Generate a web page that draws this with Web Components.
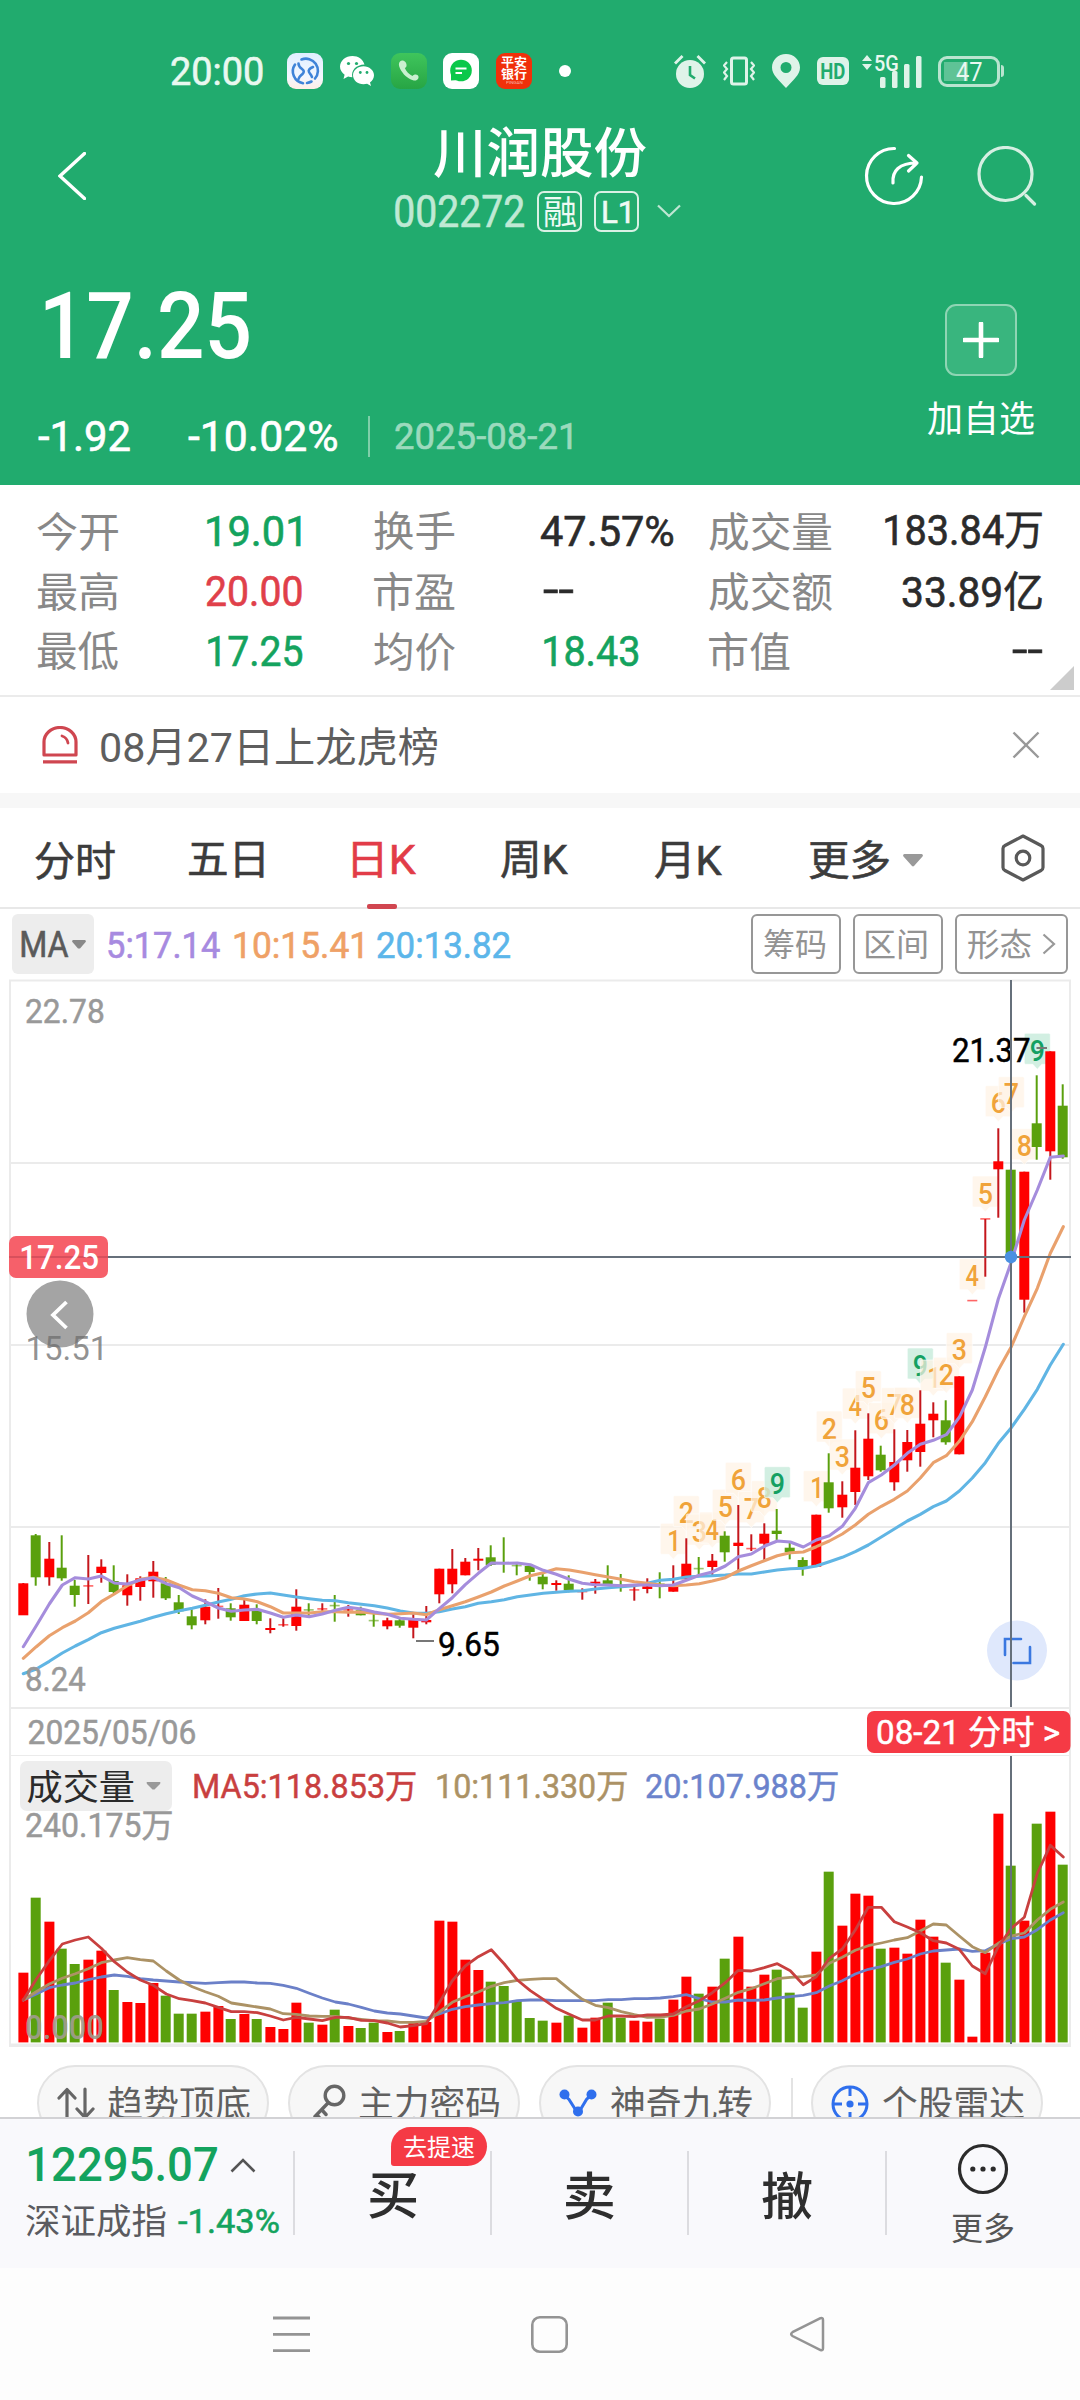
<!DOCTYPE html>
<html lang="zh-CN">
<head>
<meta charset="utf-8">
<title>川润股份 002272</title>
<style>
html,body{margin:0;padding:0;background:#fff}
body{width:1080px;height:2400px;overflow:hidden;font-family:Roboto,"Noto Sans CJK SC",sans-serif}
</style>
</head>
<body>
<stock-page></stock-page>
<script>
const FONT='Roboto,"Noto Sans CJK SC",sans-serif';
const ctx=document.createElement('canvas').getContext('2d');

/* Ink box of a run of text: scale and shift that fit it to a given width, centred on a given line. */
function fit(text,size,weight,width){
  ctx.font=`${weight} ${size}px ${FONT}`;
  const m=ctx.measureText(text);
  const ink=m.actualBoundingBoxLeft+m.actualBoundingBoxRight;
  const k=width?width/ink:1;
  return {k,width:width||ink,dx:m.actualBoundingBoxLeft*k,
    mid:(m.actualBoundingBoxAscent-m.actualBoundingBoxDescent)/2,
    base:(m.fontBoundingBoxAscent-m.fontBoundingBoxDescent)/2};
}

function define(name,html,setup){
  const tpl=document.createElement('template');
  tpl.innerHTML=html;
  customElements.define(name,class extends HTMLElement{
    connectedCallback(){
      if(this.shadowRoot)return;
      const root=this.attachShadow({mode:'open'});
      root.append(tpl.content.cloneNode(true));
      if(setup)setup(this,root);
    }
  });
}

/* <fit-text s w wt>: one line of text, s = font size, w = ink width, wt = weight.
   450 is a half step between regular and medium: regular with a hairline outline. */
define('fit-text',`<style>:host{display:block;flex:none}span{display:block;white-space:nowrap;width:max-content;transform-origin:0 0}</style><span><slot></slot></span>`,(el,root)=>{
  const s=+el.getAttribute('s'),w=+el.getAttribute('w');
  let wt=el.getAttribute('wt')||400;
  const half=wt==450;if(half)wt=400;
  const f=fit(el.textContent.trim(),s,wt,w),sp=root.querySelector('span');
  el.style.width=f.width+'px';el.style.height=s+'px';
  sp.style.cssText=`font:${wt} ${s}px/${s}px ${FONT};transform:translate(${f.dx}px,${f.mid-f.base}px) scaleX(${f.k})`+(half?';-webkit-text-stroke:.6px currentColor':'');
});

const ICONS={
 app:[36,36,`<defs><linearGradient id="a" x2="0" y2="1"><stop offset="0" stop-color="#dfeeff"/><stop offset=".65" stop-color="#f2f7ff"/><stop offset="1" stop-color="#ffeee6"/></linearGradient></defs><rect width="36" height="36" rx="9" fill="url(#a)"/><g fill="none" stroke="#3f83d8" stroke-width="2.600" stroke-linecap="round"><path d="M14.500 6.500A12 12 0 0 1 28 25.500M24.500 28.500A12 12 0 0 1 20 30M16 30.200A12 12 0 0 1 8 11.500"/><path d="M11.500 10.500c0 3 1.500 4 3.500 5.500s2.500 3 .5 5c-1.500 1.500-3.500 2.500-4 5M26 14c-3.500 1.500-5 3-4 5 .7 1.500 2 2.500 3 5"/></g>`],
 wechat:[34,30,`<path fill="#fff" d="M12.500 0C5.500 0 0 4.700 0 10.600c0 3.300 1.800 6.200 4.600 8.200L3.500 23l4.600-2.400c1.300.4 2.700.6 4.200.6C11 14 16 8.800 24.500 8.400 23 3.500 18.300 0 12.500 0z"/><path fill="#fff" d="M34 19.200c0-5-4.700-9-10.500-9s-10.500 4-10.500 9 4.700 9 10.500 9c1.300 0 2.500-.2 3.600-.5L31 30l-1-3.600c2.500-1.700 4-4.300 4-7.200z"/><g fill="#21ab6e"><circle cx="8.500" cy="7.500" r="1.600"/><circle cx="16.500" cy="7.500" r="1.600"/><circle cx="20.300" cy="16.500" r="1.400"/><circle cx="27" cy="16.500" r="1.400"/></g>`],
 phone:[36,36,`<defs><linearGradient id="p" x2="0" y2="1"><stop offset="0" stop-color="#3fc55c"/><stop offset="1" stop-color="#27a544"/></linearGradient></defs><rect width="36" height="36" rx="9" fill="url(#p)"/><path d="M9 8.500c-1.500 1.500-1.500 4 0 7 3 6 7.500 10 13 11.800 2.500.7 5-.3 5.500-2.600.3-1.700-.6-2.700-2-3-1.700-.3-3 .2-4 1.400-3.500-1.600-6.200-4.300-7.700-8 1.400-.8 2-2 1.700-3.700C15 9 13.500 7.800 12 7.500c-1.200-.2-2.200.2-3 1z" fill="#c9f0d0"/>`],
 chat:[36,36,`<rect width="36" height="36" rx="9" fill="#fff"/><circle cx="18" cy="17.500" r="10.800" fill="#0bc84a"/><path d="M8 18l0 9.500 8-.5z" fill="#0bc84a"/><path d="M12.500 15.500h11M12.500 20h6.500" stroke="#fff" stroke-width="2"/>`],
 alarm:[32,33,`<g fill="#dff3e9"><circle cx="16" cy="19" r="14"/><path d="M0 7.500L7.500 0l2 2L2 9.500zM32 7.500L24.500 0l-2 2L30 9.500z"/></g><path d="M16 11v9l5 3.500" fill="none" stroke="#21ab6e" stroke-width="2.600"/>`],
 vibrate:[32,30,`<g fill="none" stroke="#dff3e9"><rect x="8.500" y="2" width="15" height="26" rx="2" stroke-width="3"/><path d="M4 6l-3 3.500 3 3.500-3 3.500 3 3.500-3 4M28 6l3 3.500-3 3.500 3 3.500-3 3.500 3 4" stroke-width="2.200"/></g>`],
 pin:[28,34,`<path fill="#dff3e9" fill-rule="evenodd" d="M14 0C6 0 0 6 0 13.500 0 21 7 26 14 34c7-8 14-13 14-20.500C28 6 22 0 14 0zm0 8a5.500 5.500 0 1 1 0 11 5.500 5.500 0 0 1 0-11z"/>`],
 net:[60,33,`<g fill="#dff3e9"><path d="M0 6l5-6 5 6zM0 9h10l-5 6z"/><rect x="18" y="22" width="5.500" height="11" rx="1.500"/><rect x="30" y="16" width="5.500" height="17" rx="1.500"/><rect x="42" y="9" width="5.500" height="24" rx="1.500"/><rect x="54" y="1" width="5.500" height="32" rx="1.500"/></g>`],
 back:[28,48,`<path d="M26.500 1.500L2 24l24.500 22.500" fill="none" stroke="#fff" stroke-width="3.400" stroke-linecap="round"/>`],
 down:[24,14,`<path d="M1 1.500l11 10.500L23 1.500" fill="none" stroke="#bfe6d3" stroke-width="2.200"/>`],
 share:[60,60,`<g fill="none" stroke="#fff" stroke-width="3.200" stroke-linecap="round" stroke-linejoin="round"><path d="M30.500 2.500A27.500 27.500 0 1 0 57.500 31"/><path d="M29 37c-1-12 6-20 24-20M44.500 9.500l8.500 7.500-8.500 8"/></g>`],
 search:[60,60,`<circle cx="28.500" cy="28" r="26.500" fill="none" stroke="#d6efe2" stroke-width="3.200"/><path d="M49 49.500l8.500 8.500" stroke="#d6efe2" stroke-width="3.200" stroke-linecap="round"/>`],
 plus:[36,36,`<path d="M18 1.500v33M1.500 18h33" stroke="#fff" stroke-width="4.600" stroke-linecap="round"/>`],
 siren:[36,38,`<g fill="none" stroke="#cf4650" stroke-width="3.200"><path d="M2 29V16a16 14.500 0 0 1 32 0v13z" stroke-linejoin="round"/><path d="M1 35.800h34"/><path d="M20 10q5 1.500 6 7" stroke-linecap="round" stroke-width="2.800"/></g>`],
 close:[28,28,`<path d="M1.500 1.500l25 25m0-25l-25 25" stroke="#999" stroke-width="2.400"/>`],
 hex:[44,48,`<g fill="none" stroke="#595959" stroke-width="3.200" stroke-linejoin="round"><path d="M22 2L40 11.500q2 1 2 3v19q0 2-2 3L22 46 4 36.500q-2-1-2-3v-19q0-2 2-3z"/><circle cx="22" cy="24" r="6.800"/></g>`],
 tri:[20,13,`<path d="M1.500 0h17a1.500 1.500 0 0 1 1 2.500L11 12a1.500 1.500 0 0 1-2 0L.5 2.500A1.500 1.500 0 0 1 1.500 0z" fill="#999"/>`],
 tri2:[14,9,`<path d="M1 0h12q1.300.8.600 2L8 8.500H6L.400 2Q-.3.800 1 0z" fill="#888"/>`],
 right:[14,22,`<path d="M1.500 1.500L12 11 1.500 20.500" fill="none" stroke="#999" stroke-width="2.200"/>`],
 updown:[38,34,`<g fill="none" stroke="#666" stroke-width="3.200" stroke-linecap="round" stroke-linejoin="round"><path d="M10 31V3M2 11l8-8.500L18 11M28 2v28M20 22l8 8.500 8-8.500"/></g>`],
 key:[34,36,`<g fill="none" stroke="#666" stroke-width="3.400" stroke-linecap="round"><circle cx="22.500" cy="11.500" r="9.300"/><path d="M16 19L3 32.500M10 26l4 4.500M5 31l4 4.500"/></g>`],
 vee:[38,28,`<path d="M5 6l5 4.500 8 12.500h2l7.500-12.500L33 5" fill="none" stroke="#2f6fed" stroke-width="3"/><circle cx="5.500" cy="5.500" r="5" fill="#2f6fed"/><circle cx="32.500" cy="5.500" r="5" fill="#2f6fed"/><circle cx="19" cy="22.500" r="5" fill="#2f6fed"/>`],
 radar:[38,38,`<g fill="none" stroke="#2f6fed" stroke-width="3"><circle cx="19" cy="19" r="17"/><path d="M19 2v9M19 27v9M2 19h9M27 19h9"/></g><circle cx="19" cy="19" r="3.600" fill="#2f6fed"/>`],
 up:[26,15,`<path d="M1.500 13.500L13 2l11.500 11.500" fill="none" stroke="#555" stroke-width="2.600"/>`],
 more:[52,52,`<circle cx="26" cy="26" r="23.500" fill="none" stroke="#2b2b2b" stroke-width="3.200"/><g fill="#2b2b2b"><circle cx="15.800" cy="26" r="2.600"/><circle cx="26" cy="26" r="2.600"/><circle cx="36.200" cy="26" r="2.600"/></g>`],
 menu:[37,37,`<path d="M0 2h37M0 18.300h37M0 34.700h37" stroke="#949494" stroke-width="2.800"/>`],
 home:[37,37,`<rect x="1.300" y="1.300" width="34.400" height="34.400" rx="7.500" fill="none" stroke="#949494" stroke-width="2.600"/>`],
 prev:[36,37,`<path d="M31.500 2.200L3.500 16.200q-2.800 1.900 0 3.800l28 14q2.500.8 2.500-1.800V4q0-2.600-2.500-1.800z" fill="none" stroke="#949494" stroke-width="2.500"/>`]
};
define('ui-icon',`<style>:host{display:block;flex:none}svg{display:block}</style>`,(el,root)=>{
  const [w,h,body]=ICONS[el.getAttribute('name')];
  root.innerHTML+=`<svg width="${w}" height="${h}" viewBox="0 0 ${w} ${h}">${body}</svg>`;
});

define('status-bar',`<style>
:host{display:flex;height:142px;align-items:center;color:#e9f8f0;padding-left:171px}
ui-icon,.i{margin-left:var(--m,0)}
.i ui-icon{margin-left:0}
.i{box-sizing:border-box;flex:none}
.bank{width:36px;height:36px;border-radius:9px;background:#f0300a;color:#fff;display:flex;flex-direction:column;align-items:center;padding-top:3px}
.dot{width:12px;height:12px;border-radius:50%;background:#fff}
.hd{width:32px;height:28px;border-radius:6px;background:#dff3e9;color:#21ab6e;display:flex;align-items:center;justify-content:center}
.net{display:flex;position:relative}.net fit-text{position:absolute;left:13px;top:-3px}
.bat{width:62px;height:31px;border:3px solid #b9e4cf;border-radius:9px;display:flex;align-items:center;justify-content:center;background:linear-gradient(#5fc396,#5fc396) 3px 3px/24px 19px no-repeat}
.cap{width:3px;height:12px;border-radius:0 3px 3px 0;background:#b9e4cf;margin-left:1px}
</style>
<fit-text s="38" w="92" wt="450">20:00</fit-text>
<ui-icon name="app" style="--m:24px"></ui-icon>
<ui-icon name="wechat" style="--m:17px"></ui-icon>
<ui-icon name="phone" style="--m:17px"></ui-icon>
<ui-icon name="chat" style="--m:16px"></ui-icon>
<div class="i bank" style="--m:17px"><fit-text s="12" w="26" wt="700">平安</fit-text><fit-text s="12" w="26" wt="700">银行</fit-text><fit-text s="4" w="17" style="opacity:.6;margin-top:1px">PINGAN</fit-text></div>
<div class="i dot" style="--m:27px"></div>
<ui-icon name="alarm" style="--m:103px"></ui-icon>
<ui-icon name="vibrate" style="--m:17px"></ui-icon>
<ui-icon name="pin" style="--m:17px"></ui-icon>
<div class="i hd" style="--m:17px"><fit-text s="22" w="24" wt="700">HD</fit-text></div>
<div class="i net" style="--m:13px"><ui-icon name="net"></ui-icon><fit-text s="22" w="23" wt="500">5G</fit-text></div>
<div class="i bat" style="--m:16px"><fit-text s="26" w="26">47</fit-text></div><div class="cap"></div>`);

define('quote-header',`<style>
:host{display:block;height:485px;background:#21ab6e;color:#fff}
.nav{display:flex;height:100px;align-items:flex-start;padding-left:58px}
.t{width:290px;margin-left:309px;display:flex;flex-direction:column;align-items:center;margin-top:-17px}
.sub{display:flex;align-items:center;align-self:stretch;height:42px;color:#bfe9d4;margin-top:11px}
.tag{box-sizing:border-box;width:45px;height:41px;border:2.500px solid #d9f1e5;border-radius:7px;color:#effaf4;display:flex;align-items:center;justify-content:center;margin-left:12px}
.main{display:flex;padding:0 46px 0 38px}
.l{padding-top:37px}
.row{display:flex;align-items:center;height:42px;margin-top:44px}
.sep{width:2px;height:41px;background:#7fcfa9;margin:0 25px 0 31px}
.r{margin-left:auto;padding-top:62px;display:flex;flex-direction:column;align-items:center}
.add{box-sizing:border-box;width:72px;height:72px;border:2px solid #8fd5b4;border-radius:11px;background:#39b57e;display:flex;align-items:center;justify-content:center;margin-bottom:24px}
</style>
<status-bar></status-bar>
<div class="nav"><ui-icon name="back" style="margin-top:10px"></ui-icon>
 <div class="t"><fit-text s="54" w="212" wt="500">川润股份</fit-text>
  <div class="sub"><fit-text s="43.500" w="129" wt="450">002272</fit-text><div class="tag" style="margin-left:13px"><fit-text s="33" w="32">融</fit-text></div><div class="tag"><fit-text s="31" w="27" wt="450">L1</fit-text></div><ui-icon name="down" style="margin-left:18px"></ui-icon></div></div>
 <ui-icon name="share" style="margin:4px 0 0 179px"></ui-icon><ui-icon name="search" style="margin:4px 0 0 53px"></ui-icon></div>
<div class="main"><div class="l"><fit-text s="92" w="204" wt="500" style="margin-left:7px">17.25</fit-text>
 <div class="row"><fit-text s="43" w="92" wt="450">-1.92</fit-text><fit-text s="43" w="149" wt="450" style="margin-left:58px">-10.02%</fit-text><i class="sep"></i><fit-text s="36.500" w="176" wt="450" style="color:#9cdabd">2025-08-21</fit-text></div></div>
 <div class="r"><div class="add"><ui-icon name="plus"></ui-icon></div><fit-text s="36" w="106">加自选</fit-text></div></div>`);

define('quote-cell',`<style>:host{display:flex;align-items:center;height:60px}
::slotted([slot=k]){color:#888}::slotted([slot=v]){margin-left:var(--gap,auto)}</style><slot name="k"></slot><slot name="v"></slot>`);

define('quote-grid',`<style>
:host{display:grid;grid-template-columns:337px 335px 333px;grid-auto-rows:60px;box-sizing:border-box;height:210px;padding:16px 0 0 37px;color:#2b2b2b;position:relative;background:#fff}
.g{color:#14a35e}.r{color:#e0404a}
svg{position:absolute;right:6px;bottom:5px}
</style>`,(el,root)=>{
  const d=[['今开',81,'19.01',93,'g',170],['换手',81,'47.57%',132,'',167],['成交量',123,'183.84万',157],
   ['最高',81,'20.00',96,'r',169],['市盈',81,'--',30,'',169],['成交额',123,'33.89亿',140],
   ['最低',81,'17.25',94,'g',171],['均价',81,'18.43',94,'g',170],['市值',81,'--',30]];
  root.innerHTML+=d.map(c=>`<quote-cell style="${c[5]?`--gap:${c[5]-c[1]}px`:''}"><fit-text slot="k" s="41" w="${c[1]}">${c[0]}</fit-text><fit-text slot="v" class="${c[4]||''}" s="42" w="${c[3]}" wt="450">${c[2]}</fit-text></quote-cell>`).join('')
   +'<svg width="24" height="24"><path d="M24 0v24H0z" fill="#ccc"/></svg>';
});

define('notice-bar',`<style>:host{display:flex;box-sizing:border-box;height:98px;align-items:center;border-top:2px solid #ebebeb;padding:0 40px 1px 42px;color:#5e5e5e;background:#fff}ui-icon:last-child{margin-left:auto}</style>
<ui-icon name="siren"></ui-icon><fit-text s="41" w="336" style="margin:4px 0 0 23px">08月27日上龙虎榜</fit-text><ui-icon name="close"></ui-icon>`);

define('period-tabs',`<style>
:host{display:flex;box-sizing:border-box;height:116px;margin-top:0;border-top:15px solid #f7f7f7;border-bottom:2px solid #e8e8e8;align-items:center;padding:5px 0 0 35px;color:#3c3c3c}
.on{color:#e23c48;position:relative}.on::after{content:"";position:absolute;left:14px;top:64px;width:30px;height:5px;border-radius:2px;background:#d14650}
</style>
<fit-text s="41" w="80" wt="450">分时</fit-text><fit-text s="41" w="75" wt="450" style="margin-left:74px">五日</fit-text><fit-text class="on" s="41" w="63" wt="450" style="margin-left:89px">日K</fit-text><fit-text s="41" w="67" wt="450" style="margin-left:85px">周K</fit-text><fit-text s="41" w="67" wt="450" style="margin-left:87px">月K</fit-text><fit-text s="41" w="80" wt="450" style="margin-left:87px">更多</fit-text><ui-icon name="tri" style="margin-left:14px"></ui-icon><ui-icon name="hex" style="margin-left:78px;margin-top:-4px"></ui-icon>`);

define('ma-row',`<style>
:host{display:flex;height:70px;box-sizing:border-box;align-items:center;padding:0 12px}
.ma{box-sizing:border-box;width:82px;height:60px;border-radius:6px;background:#ededed;color:#5a5a5a;display:flex;align-items:center;padding-left:9px;gap:3px}
.b{box-sizing:border-box;height:60px;border:2.500px solid #979797;border-radius:6px;color:#939393;display:flex;align-items:center;padding-left:11px;margin-left:12px}
</style>
<div class="ma"><fit-text s="36" w="48" wt="450">MA</fit-text><ui-icon name="tri2"></ui-icon></div>
<fit-text s="36" w="112" wt="450" style="margin:2px 0 0 14px;color:#a78ae0">5:17.14</fit-text><fit-text s="36" w="127" wt="450" style="margin:2px 0 0 15px;color:#efa166">10:15.41</fit-text><fit-text s="36" w="133" wt="450" style="margin:2px 0 0 15px;color:#5cb6ea">20:13.82</fit-text>
<div class="b" style="width:90px;margin-left:auto"><fit-text s="32" w="62">筹码</fit-text></div><div class="b" style="width:90px"><fit-text s="32" w="61">区间</fit-text></div><div class="b" style="width:113px"><fit-text s="32" w="63">形态</fit-text><ui-icon name="right" style="margin-left:11px"></ui-icon></div>`);

/* ---- charts ---- */
const X=i=>23.3+13*i;
const RED='#fe0000',GREEN='#5aa00d';
const label=(t,x,w,cy,size,fill,wt=450)=>{const half=wt==450,n=half?400:wt,f=fit(t,size,n,w);
  return `<text transform="translate(${x+f.dx} ${cy+f.mid}) scale(${f.k} 1)" font-family='${FONT}' font-size="${size}" font-weight="${n}" fill="${fill}"${half?` stroke="${fill}" stroke-width=".5"`:''}>${t}</text>`};
const line=(ys,c,w=3.1)=>`<polyline fill="none" stroke="${c}" stroke-width="${w}" stroke-linejoin="round" stroke-linecap="round" points="${ys.map((y,i)=>X(i).toFixed(1)+','+y.toFixed(1)).join(' ')}"/>`;

/* colour, high, body top, body bottom, low */
const K=`r 1583 1583.3 1615.3 1615|g 1534 1535.3 1577.3 1585.7|r 1542 1558.7 1577.3 1585.7|g 1535.3 1567.7 1578.3 1580.7|g 1580 1585.7 1595 1606.7|r 1555 1585.5 1586.5 1604|r 1559.3 1566.7 1573 1582.7|g 1565.3 1581 1592 1593.3|r 1574.3 1585.3 1595.3 1605.7|r 1576.3 1578.3 1587 1600.7|r 1561 1571.7 1581.3 1597.7|g 1577 1583.3 1598.3 1600|g 1595 1602.3 1611.3 1614|g 1609.3 1616.3 1625.3 1629.3|r 1599.3 1606.7 1620.3 1624.3|r 1588 1606 1607 1618.7|g 1603.3 1608.3 1617.3 1620.7|r 1598.3 1604.7 1621 1621|g 1604.3 1610.3 1621 1624.3|r 1618.3 1628 1630 1633.3|r 1618.3 1624.4 1625.4 1626.7|r 1589.3 1606.7 1626 1630.7|g 1603.3 1609.500 1610.500 1617.700|r 1603.300 1608.500 1609.500 1611.700|g 1595 1605.200 1606.200 1621.700|r 1605 1609.500 1610.500 1616.700|g 1606.700 1610.300 1615.300 1615.300|g 1613.300 1620.200 1621.200 1626.700|r 1617.700 1620.300 1626.300 1629.300|g 1618.300 1620.300 1625.700 1627.700|r 1614 1620 1627.700 1638.300|r 1606 1620 1622.300 1624.300|r 1568.700 1568.700 1594.300 1603.300|r 1549 1568.700 1584.300 1593.300|r 1558 1561.700 1575.300 1575.300|r 1548 1558.700 1560.700 1570.300|g 1545.300 1557.300 1565 1566|g 1537.300 1562.700 1563.700 1572.700|g 1563.300 1565.200 1566.200 1575.300|g 1565 1566 1572 1580.700|g 1574 1576.700 1584.300 1589.300|r 1580.300 1583 1585 1590.700|g 1575.300 1583.700 1590.300 1592.300|r 1588.300 1591.200 1592.200 1599.700|r 1579 1581.700 1583.700 1593.700|g 1565.300 1580.300 1584.300 1585|g 1574 1585 1586 1591.700|r 1586.700 1589.500 1590.500 1600.700|r 1578.300 1586.300 1589 1593.300|g 1572.300 1583.700 1584.700 1598.300|r 1565.300 1585.700 1591.700 1591.700|r 1538.300 1563.700 1579.300 1579.300|g 1557 1568.200 1569.200 1574.700|r 1554 1560.700 1567 1575|g 1531.300 1535.700 1552.300 1561.700|r 1505 1542.700 1546 1572.300|r 1534.300 1548.200 1549.200 1551|r 1523.300 1533.700 1543.700 1560.700|g 1509 1530.700 1534 1540|g 1542.300 1547.700 1552.300 1559.300|g 1557.300 1560 1568.700 1575.700|r 1514.700 1514.700 1566.700 1566.700|g 1453.300 1482.300 1508.300 1512.700|r 1481.300 1494.700 1507.300 1517.700|r 1430.300 1467.700 1492 1505|r 1413.300 1438.700 1476.300 1480|g 1445.700 1454.700 1470.300 1471.700|r 1429.300 1462 1482.300 1490.700|r 1430 1442 1460.300 1471.700|r 1390.300 1423.700 1452 1466.700|r 1402.300 1413.700 1420.300 1437.300|g 1400.300 1420.300 1442.300 1444.700|r 1376.300 1376.300 1454.300 1454.300|r 1300.700 1300.200 1301.200 1300.700|r 1219 1218.500 1219.500 1276.700|r 1128.300 1161.300 1169.300 1217.700|g 1169.700 1169.700 1257.300 1257.300|r 1171.700 1171.700 1299.700 1312.700|g 1075.300 1123.300 1147 1159.700|r 1051.300 1051.300 1151.300 1179.700|g 1084.300 1105.700 1157.300 1158.700`
 .split('|').map(s=>s.split(' ').map((v,i)=>i?+v:v));
const MA5=[1646.7,1625.7,1604,1585,1577.7,1579,1576,1583,1584,1580,1577.7,1583.7,1587.7,1596,1601.7,1608,1611.3,1610,1609.3,1613,1617.3,1615,1616.7,1614,1610.3,1607.3,1609,1612,1614.3,1618.3,1619.3,1620,1608.7,1597.7,1584.7,1573.3,1563,1563.3,1563,1564.7,1570.3,1574.3,1579.3,1583.3,1584.7,1585,1585.7,1585,1585,1585.7,1585,1580.3,1575.3,1572,1566,1556.7,1554,1546.3,1541,1542,1547,1540,1535.7,1526.3,1508.3,1482.7,1475,1465,1453.3,1444.3,1440.3,1434.7,1417.3,1390,1347.3,1299,1262,1220,1190,1157.3,1156];
const MA10=[1658.3,1646.7,1635.7,1627.7,1621,1612.7,1601.7,1594,1585.7,1579.3,1577.3,1580,1585.3,1589.7,1590.7,1593.3,1597.7,1599,1601.7,1606.7,1613,1613,1613,1611.7,1611.7,1612.3,1612,1613.3,1614.3,1613.7,1613,1614.7,1609.7,1605.7,1601.7,1597,1592,1586,1581,1575.7,1572.7,1568.7,1570,1572.3,1574.7,1577,1579.3,1581.7,1583.3,1585,1585.7,1585,1583.7,1581,1577.7,1571,1565.7,1560.7,1555.7,1552.7,1552,1546.7,1541,1534,1525,1514.3,1506.3,1499.3,1491,1478,1462.7,1455.7,1441.3,1421.7,1396.7,1370,1346.7,1316.7,1288.3,1253.3,1226.7];
const MA20=[1673.7,1669,1661.3,1653,1646,1639.7,1632.7,1628.3,1624.7,1621.3,1617.3,1613.7,1610.7,1608.3,1605.3,1602,1599.3,1595.7,1594,1593,1595,1597,1598.7,1600.3,1600.7,1602.7,1604.3,1605.7,1608,1611,1613,1613.3,1611.7,1609,1606.7,1603.3,1601.7,1599.7,1596.7,1595,1593.3,1592.3,1591.3,1590.7,1589,1587.7,1586.7,1585.7,1583.3,1580.3,1579.3,1577,1576.3,1575.7,1575,1574,1574,1572,1570,1568.7,1568.3,1566,1561.7,1557.3,1551.7,1545,1537,1529,1521,1514.3,1506.7,1501,1491,1478,1462.7,1443.3,1427.7,1409.3,1389.3,1365,1344.3];
/* nine-turn marks: bar index, digit, top */
const MARKS=[[50,1,1523.3],[51,2,1495.7],[52,3,1514],[53,4,1512],[54,5,1489.3],[55,6,1462.3],[56,7,1491.7],[57,8,1480.7],[58,9,1466.7],[61,1,1470.7],[62,2,1411],[63,3,1439],[64,4,1388],[65,5,1370.7],[66,6,1402.7],[67,7,1387.7],[68,8,1387.3],[69,9,1348],[70,1,1360],[71,2,1357.3],[72,3,1332.7],[73,4,1258.7],[74,5,1176],[75,6,1085.7],[76,7,1076.7],[77,8,1128.7],[78,9,1033.3]];

define('kline-chart',`<style>:host{display:block;height:777px}svg{display:block}</style>`,(el,root)=>{
  let s='<g stroke="#ebebeb" stroke-width="2"><path fill="none" d="M10 1756V980.500H1070V1756M10 1163H1070M10 1345H1070M10 1527H1070M10 1708H1070M10 1756H1070"/></g>';
  s+='<circle cx="60" cy="1314" r="33.500" fill="#a4a4a4"/><path d="M66.500 1302L53 1315l13.500 13" fill="none" stroke="#fff" stroke-width="3.800"/>';
  s+=label('22.78',26,77,1010.500,33.500,'#999')+label('15.51',27.500,74,1348,33.500,'rgba(110,110,110,.75)',400);
  for(const [i,d,y] of MARKS){const x=X(i)-13,n=d==9;
    s+=`<path d="M${x+1.500} ${y}h23q1.500 0 1.500 1.500v28q0 1.500-1.500 1.500h-7l-4.500 5-4.500-5h-7q-1.500 0-1.500-1.500v-28q0-1.500 1.500-1.500z" fill="${n?'rgba(200,236,220,.82)':'rgba(255,242,229,.72)'}" stroke="#fff" stroke-opacity=".6" stroke-width="1"/>`
     +label(d,x+(d==1?8.500:6.300),d==1?8:13.400,y+17,30,n?'#14a062':'#f0a33a',500);}
  for(const [i,[c,h,t,b,l]] of K.entries()){const g=c=='g',x=X(i)+(g?-.6:0),doji=b-t<1.2;
    s+=`<path d="M${x} ${h}V${l}" stroke="${g?GREEN:'#c4161c'}" stroke-width="2"/><rect x="${x-5}" y="${doji?t-.4:t}" width="10" height="${doji?1.600:b-t}" fill="${g?GREEN:RED}" opacity="${doji?.6:1}"/>`;}
  s+=line(MA20,'#60b5e4')+line(MA10,'#e9a16d')+line(MA5,'#a58ddc');
  s+=label('8.24',26,60,1678.700,33.500,'#999');
  s+='<path d="M416 1641H434M1036.500 1048H1047" stroke="#777" stroke-width="2"/>'+label('9.65',439,59.500,1643.500,32.500,'#000')+label('21.37',953,77,1050.300,33,'#000');
  s+='<circle cx="1017" cy="1650.500" r="30" fill="#dfe8fc"/><path d="M1005 1655v-16h16M1013.500 1663h16.500v-16" fill="none" stroke="#3b78e0" stroke-width="2.600" stroke-linecap="round"/>';
  s+='<path d="M10 1257H1071M1011 980V1707" stroke="#66707b" stroke-width="2"/><circle cx="1011" cy="1257" r="6.200" fill="#4a90e2"/>';
  s+='<rect x="9" y="1236" width="99" height="42" rx="7" fill="#f6606a"/><path d="M9 1257H108" stroke="#d8505c" stroke-width="2"/>'+label('17.25',21,77,1257.300,33.500,'#fff',500);
  s+=label('2025/05/06',28.500,166.500,1732.500,33,'#999');
  s+='<rect x="867" y="1711" width="203.500" height="42" rx="7" fill="#f53a45"/>'+label('08-21 分时 >',877,182,1732,33,'#fff');
  root.innerHTML+=`<svg width="1080" height="777" viewBox="0 979 1080 777">${s}</svg>`;
});

/* volume series, in thirds of a pixel below y=1690 */
const shift=a=>a.map(v=>v-390);
const V=[848,623,695,776,822,809,782,900,936,939,879,917,971,971,965,948,987,972,987,1011,1017,938,998,1004,959,1008,1014,998,1026,1023,999,996,692,695,809,840,875,888,933,984,...shift([1382,1388,1367,1403,1373,1328,1373,1382,1385,1376,1319,1250,1301,1280,1196,1130,1280,1244,1229,1298,1343,1175,935,1097,1001,1007,1166,1163,1181,1079,1130,1208,1259,1430,1178,761,917,1082,791,755,914])];
const V5=[930,868,812,762,750,741,775,815,846,870,886,912,926,932,939,952,965,965,968,978,990,982,987,992,982,982,991,992,999,1011,1007,1001,938,872,828,800,779,822,870,902,...shift([1318,1345,1363,1380,1380,1368,1368,1370,1365,1365,1362,1340,1322,1298,1268,1231,1233,1223,1211,1232,1274,1250,1195,1167,1110,1042,1042,1085,1101,1118,1142,1149,1168,1218,1241,1160,1105,1072,940,856,891])];
const V10=[930,905,882,865,851,836,818,810,803,809,813,843,870,890,905,919,939,945,951,957,971,973,978,979,979,984,988,992,993,997,997,994,966,937,920,906,889,878,871,868,...shift([1256,1256,1288,1318,1336,1343,1355,1364,1372,1371,1366,1353,1347,1332,1315,1297,1286,1271,1256,1252,1250,1245,1210,1192,1171,1157,1149,1140,1133,1113,1092,1095,1128,1160,1178,1150,1128,1119,1080,1048,1026])];
const V20=[930,912,893,885,879,869,861,855,859,866,870,873,876,878,880,878,876,876,879,880,886,895,910,924,936,942,952,963,969,972,978,984,972,958,950,945,941,938,932,930,...shift([1320,1322,1322,1322,1322,1319,1319,1316,1316,1314,1310,1304,1316,1326,1326,1320,1321,1320,1314,1310,1306,1298,1278,1262,1242,1228,1220,1207,1197,1182,1173,1170,1167,1174,1172,1152,1136,1131,1109,1080,1058])];
define('volume-chart',`<style>:host{display:block;height:291px}svg{display:block}</style>`,(el,root)=>{
  const y=a=>a.map(v=>1690+v/3);
  let s='<path fill="none" stroke="#ebebeb" stroke-width="2" d="M10 1756V2045M1070 1756V2045"/><path d="M9 2045.300H1071" stroke="#ebebeb" stroke-width="3.500"/>';
  s+='<rect x="20" y="1761" width="152" height="50" rx="7" fill="#ededed"/><path d="M147 1782h13q1 .7 0 2l-5.500 5.500h-2l-5.500-5.500q-1-1.300 0-2z" fill="#999"/>';
  s+=label('成交量',27.500,106,1786.300,35.500,'#2b2b2b',400)+label('MA5:118.853万',194,222,1786.700,33.500,'#c93f3f')+label('10:111.330万',437,190,1786.700,33.500,'#ac9265')+label('20:107.988万',646,192,1786.700,33.500,'#6b83cc')+label('240.175万',26,146,1826,33.500,'#999');
  y(V).forEach((t,i)=>{const g=K[i][0]=='g',x=X(i)+(g?-.6:.1);s+=`<rect x="${x-5}" y="${t}" width="10" height="${2042.400-t}" fill="${g?GREEN:RED}"/>`});
  s+=line(y(V20),'#6b80c8',2.800)+line(y(V10),'#ac9265',2.800)+line(y(V5),'#c8403f',2.800);
  s+='<path d="M1011 1756V2044" stroke="#66707b" stroke-width="2"/>';
  s+=label('0.000',26,77,2026.500,33.500,'rgba(160,156,142,.92)',500);
  root.innerHTML+=`<svg width="1080" height="291" viewBox="0 1756 1080 291">${s}</svg>`;
});

define('tool-chip',`<style>:host{display:flex;box-sizing:border-box;width:232px;height:76px;flex:none;border:2px solid #e3e3e3;border-radius:38px;background:#f7f7f7;align-items:center;color:#606060}</style><slot></slot>`);
define('chip-row',`<style>:host{display:flex;box-sizing:border-box;height:70px;overflow:hidden;padding:18px 0 0 36.500px;align-items:flex-start}
i{width:2px;height:60px;background:#e3e3e3;margin:13px 18px 0 20px}</style>
<tool-chip><ui-icon name="updown" style="margin:2px 0 0 18px"></ui-icon><fit-text s="36" w="142" style="margin-left:13px">趋势顶底</fit-text></tool-chip>
<tool-chip style="margin-left:19px"><ui-icon name="key" style="margin:-2px 0 0 22px"></ui-icon><fit-text s="36" w="139" style="margin-left:14px">主力密码</fit-text></tool-chip>
<tool-chip style="margin-left:19px"><ui-icon name="vee" style="margin:0 0 0 18px"></ui-icon><fit-text s="36" w="141" style="margin-left:14px">神奇九转</fit-text></tool-chip>
<i></i>
<tool-chip><ui-icon name="radar" style="margin:2px 0 0 18px"></ui-icon><fit-text s="36" w="141" style="margin-left:14px">个股雷达</fit-text></tool-chip>`);

define('trade-bar',`<style>
:host{display:flex;box-sizing:border-box;height:151px;border-top:2px solid #d2d2d5;background:#f9f9fc;color:#2e2e2e}
.idx{width:293px;flex:none;box-sizing:border-box;padding-left:26px}
.r{display:flex;align-items:center}
.b{width:197.200px;flex:none;box-sizing:border-box;display:flex;justify-content:center;padding:51px 0 0 3px;position:relative}
.b::before,.m::before{content:"";position:absolute;left:0;top:32px;width:2px;height:84px;background:#dcdce0}
.m{flex:1;position:relative;display:flex;flex-direction:column;align-items:center;padding:24px 0 0 2px}
.tag{position:absolute;left:98px;top:8px;width:96px;height:39px;border-radius:20px 20px 20px 3px;background:#f53a45;color:#fff;display:flex;align-items:center;justify-content:center}
</style>
<div class="idx"><div class="r" style="height:49px;margin-top:20px;color:#14a35e"><fit-text s="49" w="188" wt="500" style="margin-left:3px">12295.07</fit-text><ui-icon name="up" style="margin-left:13px;margin-top:3px"></ui-icon></div>
<div class="r" style="margin-top:15px"><fit-text s="35" w="140" style="color:#5b5b60">深证成指</fit-text><fit-text s="34" w="101" wt="450" style="margin-left:12px;color:#14a35e">-1.43%</fit-text></div></div>
<div class="b"><fit-text s="51" w="48" wt="500">买</fit-text><div class="tag"><fit-text s="24" w="71">去提速</fit-text></div></div>
<div class="b"><fit-text s="51" w="48" wt="500">卖</fit-text></div>
<div class="b"><fit-text s="51" w="50" wt="500">撤</fit-text></div>
<div class="m"><ui-icon name="more"></ui-icon><fit-text s="32" w="62" style="margin-top:17px;color:#555">更多</fit-text></div>`);

define('nav-bar',`<style>:host{display:flex;height:132px;box-sizing:border-box;padding:48px 0 0 273px;background:#fdfdfd}</style>
<ui-icon name="menu"></ui-icon><ui-icon name="home" style="margin-left:221px"></ui-icon><ui-icon name="prev" style="margin-left:221px"></ui-icon>`);

define('stock-page',`<style>:host{display:flex;flex-direction:column;width:1080px;height:2400px;background:#fff}:host>*{flex:none}</style>
<quote-header></quote-header><quote-grid></quote-grid><notice-bar></notice-bar><period-tabs></period-tabs><ma-row></ma-row><kline-chart></kline-chart><volume-chart></volume-chart><chip-row></chip-row><trade-bar></trade-bar><nav-bar></nav-bar>`);
</script>
</body>
</html>
